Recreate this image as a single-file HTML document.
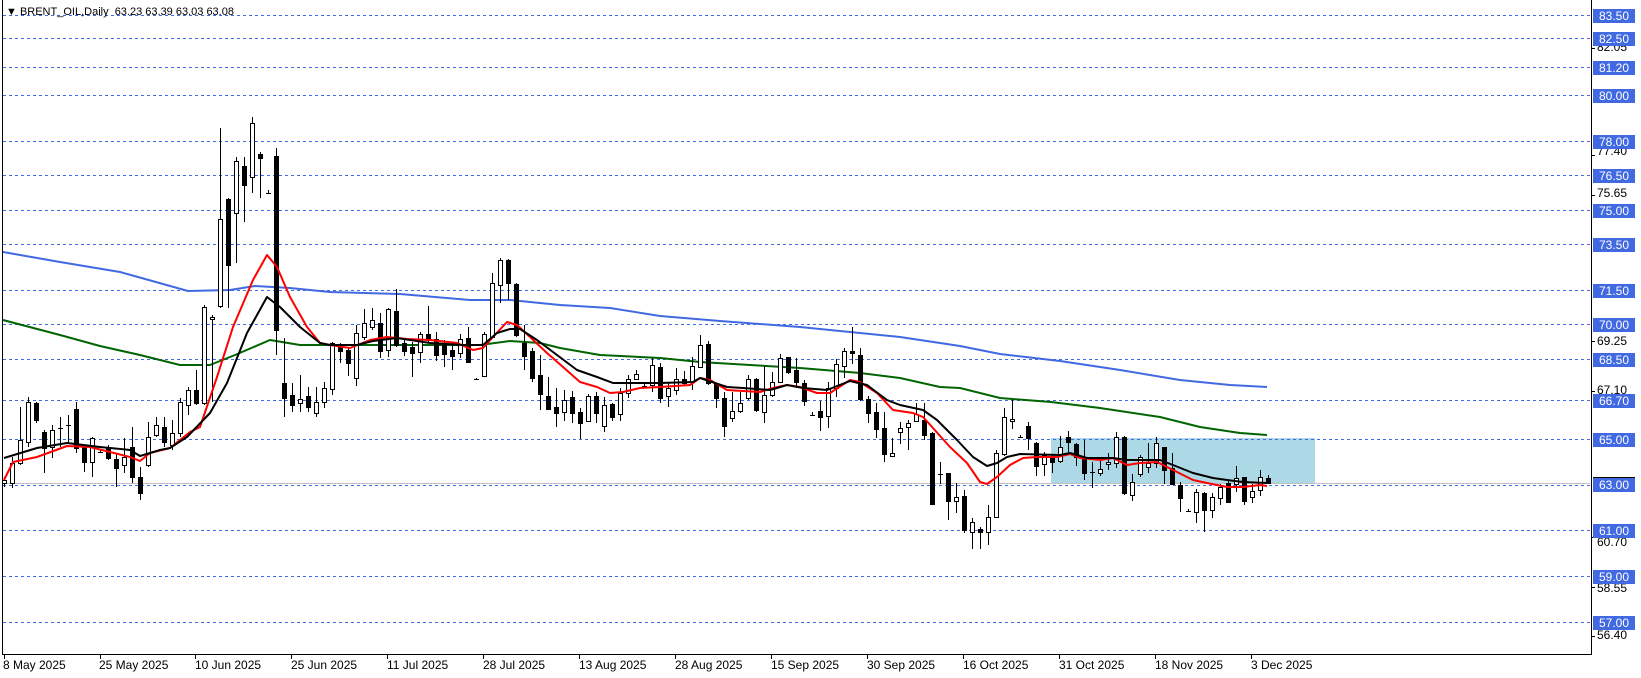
<!DOCTYPE html>
<html><head><meta charset="utf-8">
<style>
html,body{margin:0;padding:0;background:#fff;}
body{width:1641px;height:678px;position:relative;overflow:hidden;font-family:"Liberation Sans",sans-serif;}
svg{position:absolute;left:0;top:0;}
.lb{position:absolute;left:1593px;width:42px;height:14px;background:#4169e1;color:#fff;font-size:12px;line-height:14px;text-align:center;}
.tl{position:absolute;left:1597px;font-size:12px;line-height:12px;color:#000;}
.dt{position:absolute;top:658px;font-size:12px;color:#000;white-space:nowrap;}
#title{position:absolute;left:6px;top:6px;font-size:11px;color:#000;white-space:nowrap;}
</style></head><body>
<svg id="s" width="1641" height="678" xmlns="http://www.w3.org/2000/svg"></svg>
<div id="title">▼ BRENT_OIL,Daily&nbsp; 63.23 63.39 63.03 63.08</div>
<div class="tl" style="top:41px">82.05</div>
<div class="tl" style="top:145px">77.40</div>
<div class="tl" style="top:187px">75.65</div>
<div class="tl" style="top:335px">69.25</div>
<div class="tl" style="top:384px">67.10</div>
<div class="tl" style="top:536px">60.70</div>
<div class="tl" style="top:582px">58.55</div>
<div class="tl" style="top:629px">56.40</div>
<div id="labels"></div>
<div class="dt" style="left:3px">8 May 2025</div>
<div class="dt" style="left:99px">25 May 2025</div>
<div class="dt" style="left:195px">10 Jun 2025</div>
<div class="dt" style="left:291px">25 Jun 2025</div>
<div class="dt" style="left:387px">11 Jul 2025</div>
<div class="dt" style="left:483px">28 Jul 2025</div>
<div class="dt" style="left:579px">13 Aug 2025</div>
<div class="dt" style="left:675px">28 Aug 2025</div>
<div class="dt" style="left:771px">15 Sep 2025</div>
<div class="dt" style="left:867px">30 Sep 2025</div>
<div class="dt" style="left:963px">16 Oct 2025</div>
<div class="dt" style="left:1059px">31 Oct 2025</div>
<div class="dt" style="left:1155px">18 Nov 2025</div>
<div class="dt" style="left:1251px">3 Dec 2025</div>
<div class="lb" style="top:477px;height:2px;background:#000"></div>
<div class="lb" style="top:478px">63.00</div>
<script>
var s=document.getElementById('s'),h='';
function Y(p){return 14.7+(83.5-p)*22.92;}
h+='<rect x="1051" y="438" width="264" height="45" fill="#add8e6"/>';
var prices=[83.5,82.5,81.2,80,78,76.5,75,73.5,71.5,70,68.5,66.7,65,63,61,59,57];
var lab='';
prices.forEach(function(p){var y=Math.round(Y(p))+0.5;
 h+='<line x1="3" y1="'+y+'" x2="1590" y2="'+y+'" stroke="#4169e1" stroke-dasharray="3,3"/>';
 if(p!=63) lab+='<div class="lb" style="top:'+(Math.round(Y(p))-6)+'px">'+p.toFixed(2)+'</div>';
});
document.getElementById('labels').innerHTML=lab;
h+='<line x1="3" y1="483.5" x2="1590" y2="483.5" stroke="#c0c0c0"/>';
[82.05,77.4,75.65,69.25,67.1,60.7,58.55,56.4].forEach(function(p){var y=Math.round(Y(p))+.5;h+='<line x1="1591" y1="'+y+'" x2="1595" y2="'+y+'" stroke="#000"/>';});
[3.7,99.5,195,291,387,483,579,675,771,867,963,1059,1155,1251].forEach(function(x){x=Math.round(x)+.5;h+='<line x1="'+x+'" y1="654" x2="'+x+'" y2="659" stroke="#000"/>';});
var segs=[[100,0,[[1130,1140,1150,1160,0],[1070,1090,1150,1165,0],[920,1020,1090,1095,0],[890,905,1025,1040,0],[905,910,960,970,1],[990,995,1045,1120,1],[975,990,1040,1075,0],[950,983,983,1040,0],[945,975,975,1030,0],[905,928,1045,1060,1],[1035,1040,1085,1115,1],[1010,1015,1085,1130,0],[1050,1057,1057,1060,0],[1035,1045,1075,1080,1],[1060,1078,1105,1160,1],[1015,1070,1095,1120,0],[980,1040,1130,1150,1],[1100,1130,1180,1200,1],[965,1010,1095,1100,0],[950,975,1005,1010,0],[950,980,1025,1040,1],[960,1000,1035,1050,0],[895,905,1000,1010,0],[860,870,915,945,0],[810,870,910,915,1],[615,620,910,915,0],[645,650,658,905,0],[85,358,618,625,0],[295,298,495,625,1],[170,182,340,490,0],[170,198,255,365,1],[50,70,230,280,0],[155,162,175,295,1],[270,278,278,282,0],[145,168,690,765,1],[715,850,893,950,1],[850,885,915,935,1],[825,898,910,935,0],[860,888,920,935,1],[860,905,938,950,0],[845,865,905,925,0]]],
[230,41,[[335,340,478,495,0],[340,350,362,398,1],[350,360,400,437,1],[285,310,445,467,0],[238,280,320,330,0],[235,270,290,300,0],[250,280,362,383,1],[235,238,360,382,0],[178,243,345,350,1],[325,340,362,378,1],[335,350,370,440,1],[307,313,367,400,0],[228,313,330,340,1],[305,328,375,392,1],[330,345,373,412,1],[340,360,377,420,1],[313,327,370,385,0],[292,325,395,400,1],[443,447,447,450,0],[305,313,437,437,0],[128,160,320,325,0],[85,90,165,220,0],[88,90,160,210,1],[160,163,315,322,1],[285,338,377,420,1],[355,363,443,455,1],[375,435,493,540,1],[440,498,537,540,1],[475,532,548,590,1],[480,510,545,573,0],[483,502,550,580,1],[535,547,578,628,1],[492,498,572,577,0],[485,498,548,580,1],[500,525,587,605,0],[518,522,562,572,1],[475,490,553,572,0],[435,448,490,505,0],[420,433,447,450,0],[462,467,467,472,0],[385,405,465,487,0],[400,412,505,518,1]]],
[300,83,[[245,265,287,322,0],[205,237,270,285,0],[213,238,250,255,1],[170,198,245,270,0],[105,135,200,205,0],[123,132,250,255,1],[248,250,293,325,1],[275,295,378,412,1],[275,333,353,365,0],[275,310,332,340,0],[225,238,293,300,0],[235,238,330,337,1],[198,285,337,368,0],[215,247,284,290,0],[162,175,245,250,0],[170,172,215,222,1],[175,210,247,265,1],[240,250,303,318,1],[335,345,345,348,0],[303,333,350,392,1],[245,265,347,383,0],[178,193,265,290,0],[145,153,197,233,0],[80,153,160,192,1],[143,165,297,302,1],[288,298,338,370,1],[310,337,388,413,1],[335,385,463,485,1],[415,460,467,470,0],[365,383,395,432,0],[360,368,382,450,0],[310,343,362,365,0],[310,360,405,420,1],[395,400,612,615,1],[487,523,523,553,0],[518,520,604,660,1],[550,592,604,638,0]]],
[330,120,[[480,498,600,610,1],[565,577,605,658,0],[590,598,607,658,1],[525,560,607,645,0],[360,370,562,565,0],[235,260,373,378,0],[210,268,273,298,0],[315,320,320,325,0],[277,287,323,360,1],[335,340,407,437,1],[365,375,403,437,0],[375,385,395,430,1],[318,350,393,400,0],[303,320,337,365,1],[340,343,380,407,1],[330,380,428,450,1],[395,426,426,475,0],[393,418,428,437,0],[370,395,403,420,0],[305,320,400,415,0],[318,322,488,495,1],[432,455,495,512,0],[375,380,433,440,0],[340,400,412,428,0],[322,340,400,415,0],[350,352,420,462,1],[370,413,462,465,1],[455,465,503,545,1],[538,543,543,545,0],[478,485,547,580,0],[487,490,540,607,1],[490,502,540,565,0],[462,472,505,525,0],[450,458,515,520,1],[408,443,462,485,0],[440,442,512,525,1],[462,483,500,520,0],[420,440,480,497,0],[435,445,458,460,1]]]];
var wick='',bodies='';
segs.forEach(function(sg){var oy=sg[0];sg[2].forEach(function(c,k){var i=sg[1]+k,cx=4+8*i;
 var r=function(v){return Math.round(oy+v/3);};
 var hh=r(c[0]),t=r(c[1]),b=r(c[2]),l=r(c[3]);
 wick+='<line x1="'+(cx+.5)+'" y1="'+hh+'" x2="'+(cx+.5)+'" y2="'+l+'"/>';
 if(b-t<1){bodies+='<line x1="'+(cx-2)+'" y1="'+(t+.5)+'" x2="'+(cx+3)+'" y2="'+(t+.5)+'" stroke="#000"/>';}
 else bodies+='<rect x="'+(cx-1.5)+'" y="'+(t+.5)+'" width="4" height="'+(b-t)+'" fill="'+(c[4]?'#000':'#fff')+'" stroke="#000"/>';
});});
function pl(pts,col){return '<polyline fill="none" stroke="'+col+'" stroke-width="2" stroke-linejoin="round" points="'+pts+'"/>';}
h+=pl("3,252 60,262 120,272 188,291 230,290 255,286 290,288 330,292 400,294 470,300 510,300 560,305 610,308 660,316 720,321 800,327 860,333 900,337 960,346 1000,354 1060,361 1120,370 1180,380 1230,385 1267,387","#4169e1");
h+=pl("3,320 60,335 100,346 140,355 180,365 210,365 235,355 270,340 300,345 330,345 400,345 480,345 510,341 540,343 560,348 600,355 640,357 660,358 700,362 750,365 800,368 860,373 900,378 940,387 960,388 1000,398 1051,402 1100,408 1160,417 1200,427 1240,433 1267,435","#006400");
h+='<g stroke="#000" stroke-width="1">'+wick+'</g>'+bodies;
h+=pl("4,480 13,462 37,457 67,446 90,447 110,452 130,457 140,461 150,453 170,448 190,432 200,427 217,377 233,327 253,280 267,255 277,267 290,297 307,327 320,343 330,345 350,348 370,340 387,337 407,339 430,340 457,343 473,350 483,348 493,337 507,322 517,325 530,337 547,353 563,367 580,382 597,387 610,393 623,392 640,388 660,387 690,385 700,378 710,380 727,390 743,391 760,392 773,388 787,385 800,387 817,393 830,393 850,380 860,382 877,393 893,410 913,413 923,417 933,428 950,447 967,463 980,482 987,484 997,477 1010,465 1023,458 1037,457 1057,457 1070,454 1080,458 1100,460 1113,458 1127,465 1140,463 1157,462 1173,470 1193,480 1207,483 1227,487 1243,487 1260,485 1267,486","#ff0000");
h+=pl("4,458 37,448 67,443 100,447 130,450 140,456 160,450 170,448 187,437 210,413 227,383 247,333 267,297 280,307 300,327 320,343 330,345 357,345 373,341 397,338 430,343 463,345 483,345 497,333 510,329 520,329 537,340 557,355 577,370 597,377 613,383 630,383 660,383 693,382 700,378 727,387 743,388 770,390 787,385 803,388 827,390 850,381 867,385 887,400 900,405 923,410 937,420 957,440 973,457 987,466 997,463 1007,457 1020,454 1060,455 1070,453 1087,458 1113,458 1127,460 1160,460 1173,465 1193,473 1213,478 1227,480 1243,482 1267,483","#000");
h+='<line x1="2.5" y1="0" x2="2.5" y2="654" stroke="#000"/><line x1="2" y1="654.5" x2="1592" y2="654.5" stroke="#000"/><line x1="1591.5" y1="0" x2="1591.5" y2="655" stroke="#000"/>';
s.innerHTML=h;
</script>
</body></html>
